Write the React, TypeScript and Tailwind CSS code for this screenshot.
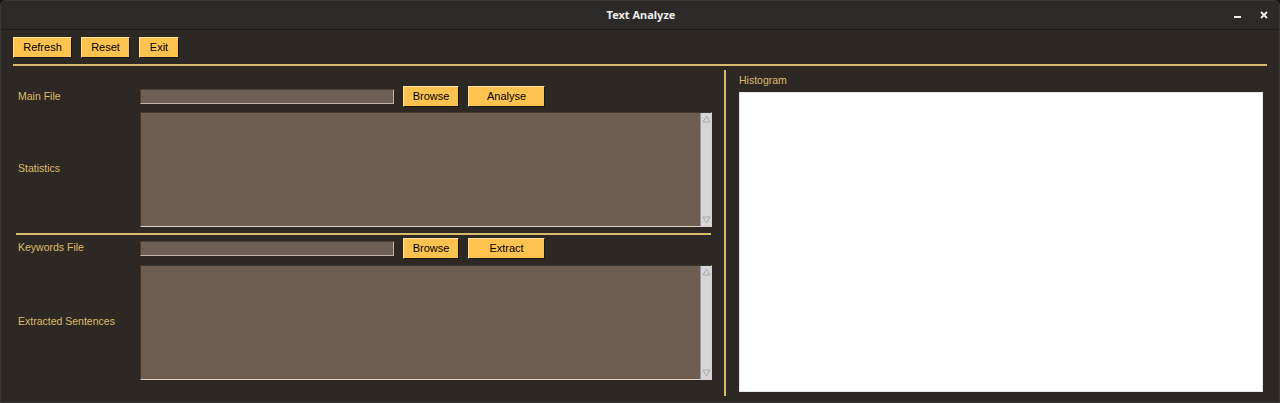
import React from "react";

const font = { fontFamily: '"Liberation Sans", Arial, sans-serif' };

function Btn({ label, w }: { label: string; w: string }) {
  return (
    <button
      className={`${w} h-[21px] bg-[#fdc34e] text-[11px] text-black border border-t-[#ffe3a0] border-l-[#ffe3a0] border-r-[#1a1612] border-b-[#1a1612] flex items-center justify-center leading-none`}
    >
      {label}
    </button>
  );
}

function Entry() {
  return (
    <div className="w-[254px] h-[15px] bg-[#6e5f54] border border-t-[#4a3f37] border-l-[#4a3f37] border-r-[#bdb3aa] border-b-[#bdb3aa]" />
  );
}

function Scrollbar() {
  return (
    <div className="w-[11px] h-full bg-[#d6d6da] border-l border-[#9a9a9e] flex flex-col justify-between items-center py-[2px]">
      <svg width="9" height="8" viewBox="0 0 9 8">
        <path d="M1 7 L4.5 1 L8 7 Z" fill="none" stroke="#a9a9ad" strokeWidth="1" />
      </svg>
      <svg width="9" height="8" viewBox="0 0 9 8">
        <path d="M1 1 L4.5 7 L8 1 Z" fill="none" stroke="#a9a9ad" strokeWidth="1" />
      </svg>
    </div>
  );
}

function TextBox() {
  return (
    <div className="w-[572px] h-[115px] flex border border-t-[#3e352f] border-l-[#3e352f] border-r-[#d8d2cc] border-b-[#d8d2cc]">
      <div className="flex-1 bg-[#6e5e51]" />
      <Scrollbar />
    </div>
  );
}

const label = "w-[127px] pl-[5px] text-[10.5px] text-[#dcbb68]";

export default function App() {
  return (
    <div style={font} className="w-[1280px] h-[403px] bg-[#191715] overflow-hidden">
      <div className="w-full h-full rounded-t-[6px] bg-[#2e2825] border border-[#3a3836] flex flex-col">
        {/* title bar */}
        <div className="h-[29px] bg-[#2b2a29] border-b border-[#1e1c1b] rounded-t-[6px] flex items-center relative shrink-0">
          <div
            className="flex-1 text-center text-[11px] font-bold text-[#ececec] pl-[2px]"
            style={{ fontFamily: '"Noto Sans", "DejaVu Sans", sans-serif' }}
          >
            Text Analyze
          </div>
          <div className="absolute right-[11px] top-[10px] flex items-center gap-[19px]">
            <div className="w-[7px] h-[2px] bg-[#f0f0f0] mt-[4px]" />
            <svg width="8" height="8" viewBox="0 0 8 8">
              <path d="M1 1 L7 7 M7 1 L1 7" stroke="#f0f0f0" strokeWidth="1.8" />
            </svg>
          </div>
        </div>

        {/* toolbar */}
        <div className="px-[12px] pt-[7px] flex gap-[9px] shrink-0">
          <Btn label="Refresh" w="w-[59px]" />
          <Btn label="Reset" w="w-[49px]" />
          <Btn label="Exit" w="w-[40px]" />
        </div>
        <div className="mx-[12px] mt-[6px] h-[2px] bg-[#d7bb6c] shrink-0" />

        {/* main */}
        <div className="flex px-[12px] pt-[4px] flex-1 min-h-0">
          {/* left column */}
          <div className="w-[700px] flex flex-col pt-[16px]">
            <div className="flex items-center h-[21px]">
              <div className={label}>Main File</div>
              <Entry />
              <div className="ml-[9px] flex gap-[9px]">
                <Btn label="Browse" w="w-[56px]" />
                <Btn label="Analyse" w="w-[77px]" />
              </div>
            </div>
            <div className="flex items-center mt-[5px]">
              <div className={`${label} -mt-[2px]`}>Statistics</div>
              <TextBox />
            </div>
            <div className="ml-[3px] mt-[6px] h-[2px] bg-[#d7bb6c] w-[695px]" />
            <div className="flex items-center h-[21px] mt-[3px]">
              <div className={`${label} -mt-[2px]`}>Keywords File</div>
              <Entry />
              <div className="ml-[9px] flex gap-[9px]">
                <Btn label="Browse" w="w-[56px]" />
                <Btn label="Extract" w="w-[77px]" />
              </div>
            </div>
            <div className="flex items-center mt-[6px]">
              <div className={`${label} -mt-[2px]`}>Extracted Sentences</div>
              <TextBox />
            </div>
          </div>

          {/* vertical separator */}
          <div className="w-[2px] ml-[11px] mb-[6px] bg-[#d7bb6c]" />

          {/* right column */}
          <div className="flex flex-col ml-[13px] flex-1 pr-[4px] pb-[10px]">
            <div className="text-[10.5px] text-[#dcbb68] pt-[3px] h-[22px]">Histogram</div>
            <div className="flex-1 bg-white border border-[#e6e6e6]" />
          </div>
        </div>
      </div>
    </div>
  );
}
